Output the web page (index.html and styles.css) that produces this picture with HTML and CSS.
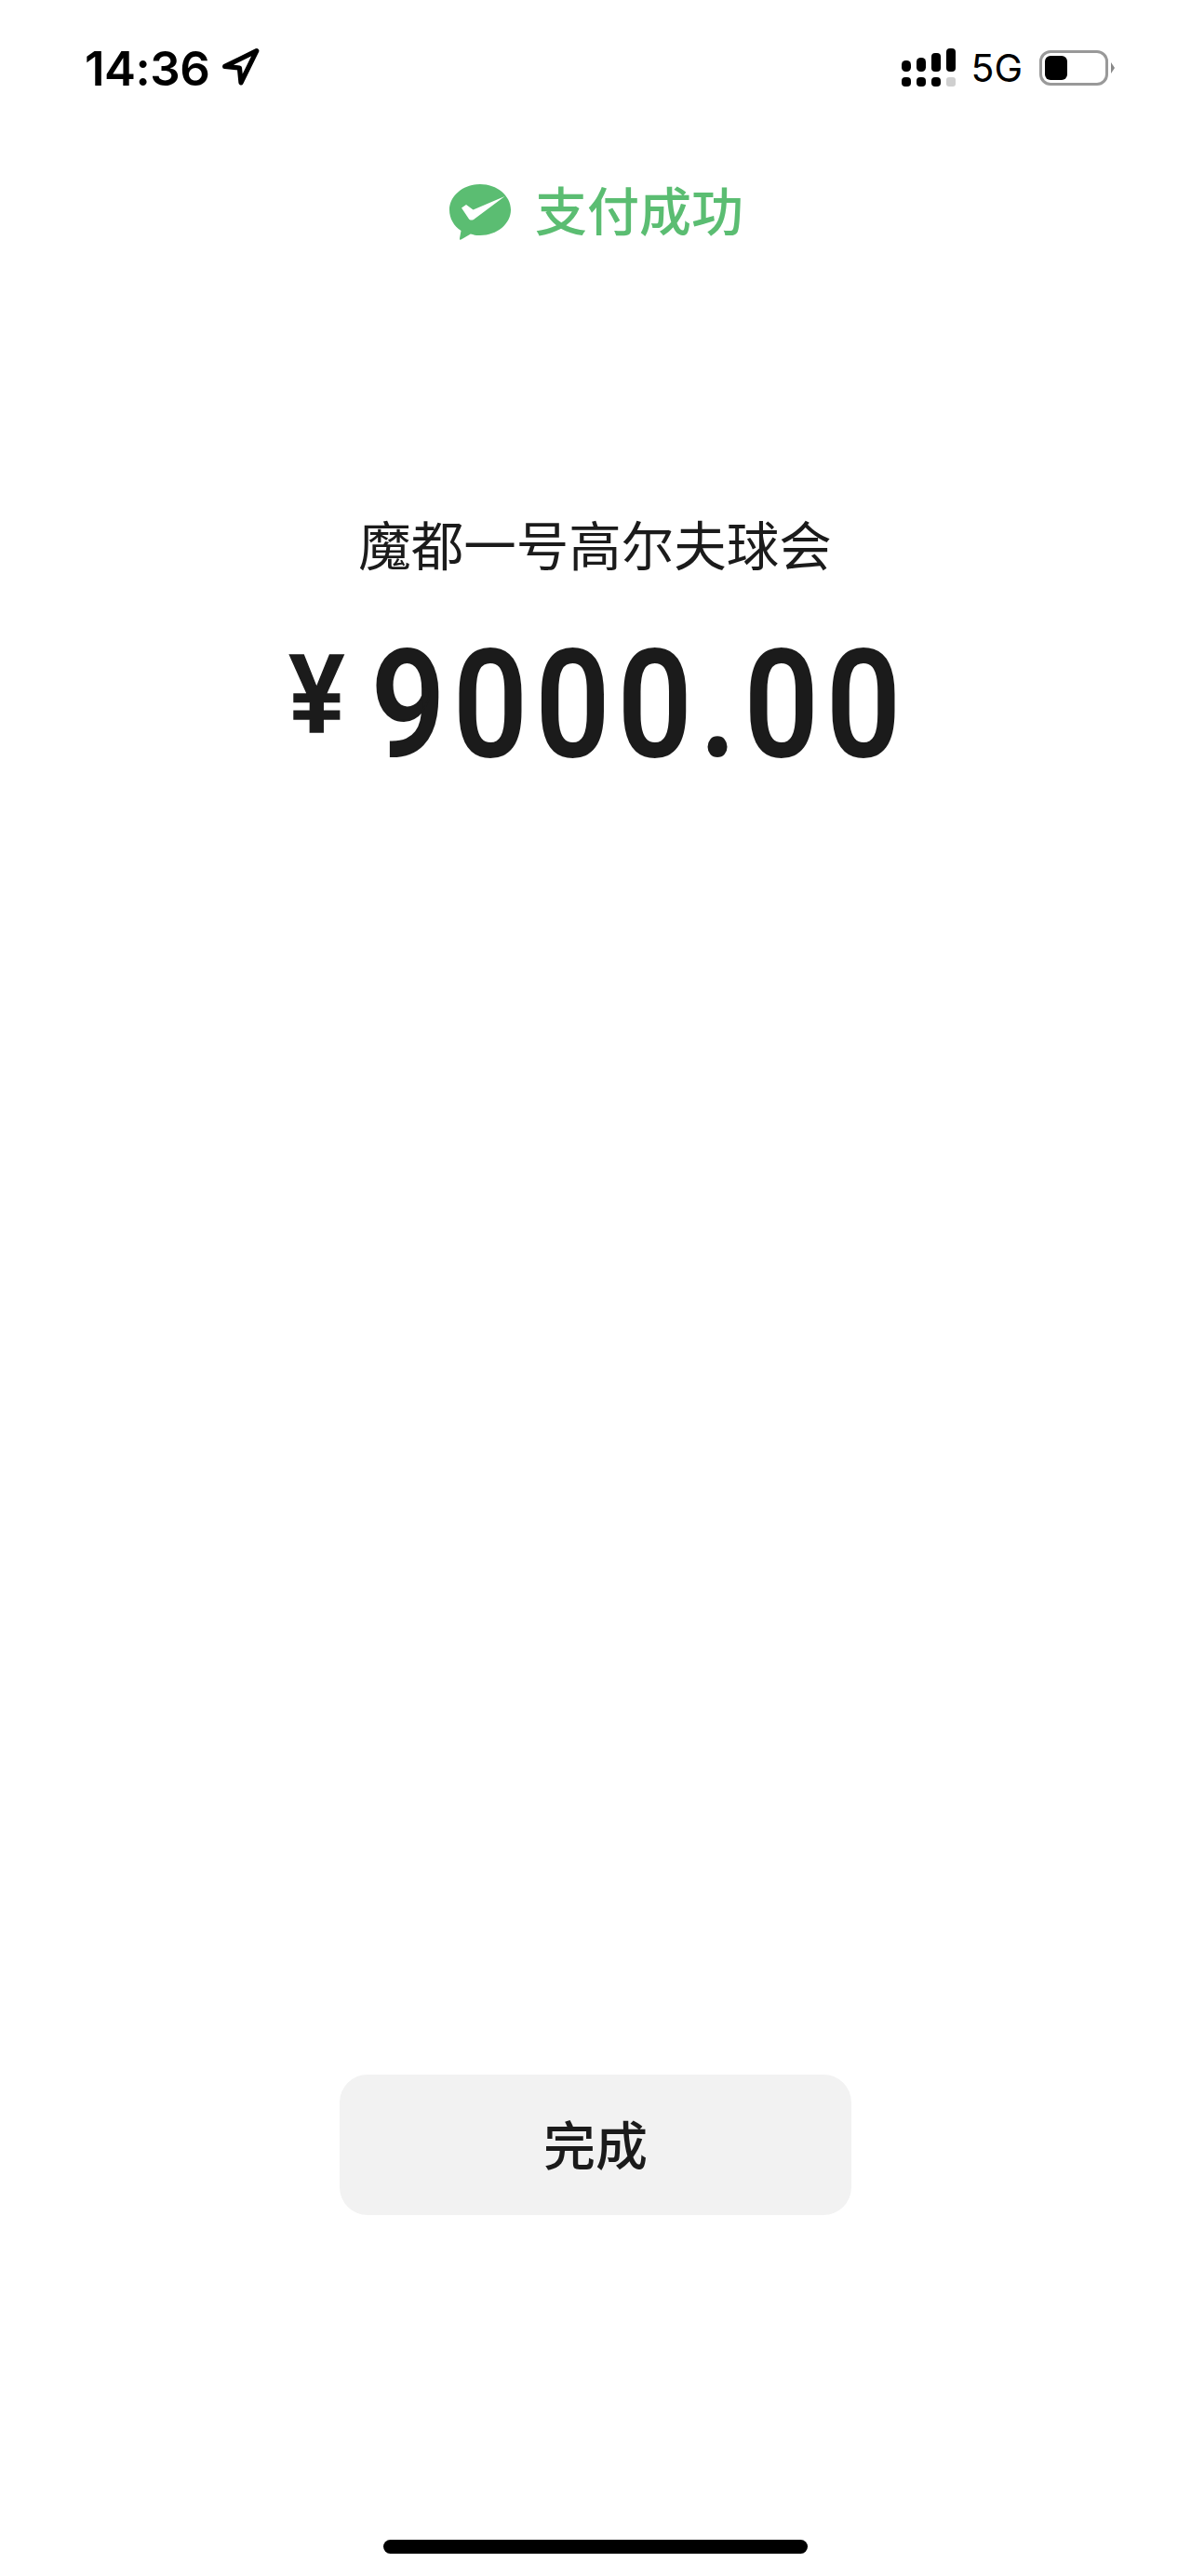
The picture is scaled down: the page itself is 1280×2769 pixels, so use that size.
FILE: index.html
```html
<!DOCTYPE html>
<html lang="zh-CN">
<head>
    <meta charset="UTF-8">
    <meta name="viewport" content="width=device-width, initial-scale=1.0">
    <title>支付成功</title>
    <link rel="stylesheet" href="styles.css">
</head>
<body>
    <div class="page">
        <div class="status-bar">
            <div class="status-left">
                <span class="time">14:36</span>
                <svg class="nav-arrow" viewBox="0 0 40 40" fill="none">
                    <path d="M3.5 19.5 L36 3.5 L20 36 L18.5 21 Z" stroke="#000" stroke-width="5" stroke-linejoin="round"/>
                </svg>
            </div>
            <div class="status-right">
                <svg class="signal" viewBox="0 0 58 41">
                    <rect x="0" y="13" width="10" height="12" rx="4.5"/>
                    <rect x="16" y="10" width="10" height="15" rx="4.5"/>
                    <rect x="32" y="5" width="10" height="20" rx="4"/>
                    <rect x="48" y="0" width="10" height="25" rx="4"/>
                    <rect x="0" y="31" width="10" height="10" rx="4"/>
                    <rect x="16" y="31" width="10" height="10" rx="4"/>
                    <rect x="32" y="31" width="10" height="10" rx="4"/>
                    <rect x="48" y="31" width="10" height="10" rx="3" fill="#cfcfcf"/>
                </svg>
                <span class="network">5G</span>
                <div class="battery">
                    <div class="battery-level"></div>
                </div>
                <div class="battery-nub"></div>
            </div>
        </div>

        <div class="result">
            <svg class="wepay-logo" viewBox="0 0 66 60">
                <path d="M33 0C51.2 0 66 12.4 66 27.5S51.2 55 33 55c-3.6 0-7-.5-10.200-1.400L12.500 59.500c-1 .5-1.700-.2-1.500-1.200l1.500-8.300C4.800 45 0 36.800 0 27.500 0 12.400 14.800 0 33 0Z" fill="#5bbd72"/>
                <path d="M13 25.500 L18 22 L25.500 27.500 L59.500 13 L26 38 C24 39 21.800 38.700 20.700 37 Z" fill="#fff"/>
            </svg>
            <span class="result-text">支付成功</span>
        </div>

        <div class="merchant">魔都一号高尔夫球会</div>

        <div class="amount">
            <span class="currency">¥</span>
            <span class="value">9000.00</span>
        </div>

        <button class="done-btn">完成</button>

        <div class="home-bar"></div>
    </div>
</body>
</html>
```

FILE: styles.css
```css
body {
    margin: 0;
    background-color: #fff;
    font-family: "Noto Sans CJK SC", "Noto Sans", sans-serif;
    color: #1b1b1b;
}
.page {
    height: 2769px;
    display: flex;
    flex-direction: column;
    align-items: center;
    overflow: hidden;
}
.status-bar {
    width: 100%;
    box-sizing: border-box;
    height: 92px;
    padding: 52px 82px 0 91px;
    display: flex;
    justify-content: space-between;
    align-items: flex-start;
}
.status-left {
    display: flex;
    align-items: center;
    height: 40px;
    color: #000;
}
.time {
    margin-top: 3px;
    font-family: Inter, sans-serif;
    font-size: 51px;
    font-weight: 600;
    line-height: 40px;
    letter-spacing: -0.5px;
}
.nav-arrow {
    width: 42px;
    height: 42px;
    margin-left: 13px;
}
.status-right {
    display: flex;
    align-items: center;
    height: 41px;
    color: #000;
}
.signal {
    width: 58px;
    height: 41px;
}
.network {
    font-family: Inter, sans-serif;
    font-size: 41px;
    line-height: 41px;
    margin-left: 16px;
    margin-top: 2px;
}
.battery {
    width: 74px;
    height: 38px;
    box-sizing: border-box;
    margin-left: 18px;
    padding: 3px;
    border: 3px solid #999;
    border-radius: 12px;
}
.battery-level {
    width: 24px;
    height: 100%;
    background-color: #000;
    border-radius: 6px;
}
.battery-nub {
    width: 0;
    height: 0;
    margin-left: 3px;
    border-left: 4px solid #888;
    border-top: 6px solid transparent;
    border-bottom: 6px solid transparent;
}
.result {
    display: flex;
    align-items: flex-start;
    margin-top: 106px;
    margin-left: 2px;
}
.wepay-logo {
    width: 66px;
    height: 60px;
}
.result-text {
    margin-top: -4px;
    margin-left: 26px;
    font-size: 56px;
    line-height: 60px;
    font-weight: 500;
    color: #5bbd72;
}
.merchant {
    margin-top: 290px;
    margin-left: -1px;
    font-size: 56.5px;
    line-height: 70px;
    font-weight: 400;
}
.amount {
    display: flex;
    align-items: flex-start;
    margin-top: 70px;
    margin-left: -6px;
}
.currency {
    display: block;
    width: 62px;
    margin-top: -13px;
    font-family: "Liberation Sans", sans-serif;
    font-size: 120px;
    line-height: 140px;
    font-weight: 700;
    -webkit-text-stroke: 1.5px #1b1b1b;
    transform: scaleX(0.88);
    transform-origin: left center;
}
.value {
    display: block;
    width: 565px;
    margin-left: 26px;
    font-family: Roboto, sans-serif;
    font-size: 159px;
    line-height: 140px;
    font-weight: 500;
    letter-spacing: 10px;
    -webkit-text-stroke: 2px #1b1b1b;
    white-space: nowrap;
    transform: scaleX(0.88);
    transform-origin: left center;
}
.done-btn {
    width: 550px;
    height: 151px;
    margin-top: auto;
    padding-bottom: 8px;
    background-color: #f2f2f2;
    color: #1b1b1b;
    border: none;
    border-radius: 30px;
    font-family: inherit;
    font-size: 56px;
    font-weight: 500;
}
.home-bar {
    width: 456px;
    height: 15px;
    margin-top: 349px;
    margin-bottom: 24px;
    background-color: #000;
    border-radius: 8px;
}
```
